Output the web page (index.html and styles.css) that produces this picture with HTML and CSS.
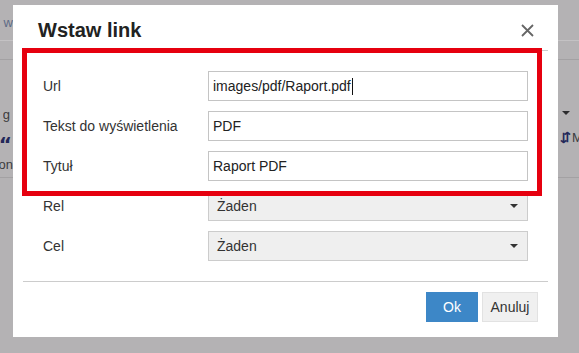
FILE: index.html
```html
<!DOCTYPE html>
<html lang="pl">
<head>
<meta charset="utf-8">
<title>Wstaw link</title>
<link rel="stylesheet" href="styles.css">
</head>
<body>
<div class="page">
  <div class="bgrow r1">
    <div class="lc"><span class="bluish">w</span></div>
    <div class="sp"></div>
    <div class="rc"></div>
  </div>
  <div class="bgrow r2">
    <div class="lc"></div>
    <div class="sp"></div>
    <div class="rc"></div>
  </div>
  <div class="bgrow r3">
    <div class="lc col">
      <span class="sub">g</span>
      <span class="sub"><span class="quote">“</span></span>
      <span class="sub">on</span>
    </div>
    <div class="sp"></div>
    <div class="rc col">
      <span class="sub"><span class="tri"></span></span>
      <span class="sub"><span class="navy">⇵</span>M</span>
      <span class="sub"></span>
    </div>
  </div>
</div>

<div class="dialog">
  <div class="dlg-head">
    <h1 class="title">Wstaw link</h1>
    <svg class="close" width="13" height="13" viewBox="0 0 13 13">
      <path d="M1 1 L12 12 M12 1 L1 12" stroke="#666" stroke-width="1.8" fill="none"/>
    </svg>
  </div>
  <div class="dlg-body">
    <div class="label">Url</div>
    <div class="field">images/pdf/Raport.pdf<span class="caret"></span></div>
    <div class="label">Tekst do wyświetlenia</div>
    <div class="field">PDF</div>
    <div class="label">Tytuł</div>
    <div class="field">Raport PDF</div>
    <div class="label">Rel</div>
    <div class="field select"><span>Żaden</span><span class="tri"></span></div>
    <div class="label">Cel</div>
    <div class="field select"><span>Żaden</span><span class="tri"></span></div>
  </div>
  <div class="dlg-foot">
    <button class="btn ok">Ok</button>
    <button class="btn cancel">Anuluj</button>
  </div>
  <div class="mark"></div>
</div>
</body>
</html>
```

FILE: styles.css
```css
html, body {
  margin: 0;
  padding: 0;
}
body {
  width: 579px;
  height: 353px;
  background: #b4b2b4;
  font-family: "Liberation Sans", Arial, sans-serif;
  overflow: hidden;
  position: relative;
}

/* background page (dimmed) */
.page {
  display: flex;
  flex-direction: column;
  color: #3c3c3e;
  font-size: 13px;
}
.bgrow {
  display: flex;
}
.r1 {
  height: 41px;
  box-sizing: border-box;
  border-bottom: 1px solid #c4c2c4;
  align-items: center;
  padding-top: 4px;
}
.r2 {
  height: 18px;
  border-bottom: 1px solid #a3a1a3;
}
.r3 {
  height: 118px;
  border-bottom: 1px solid #a3a1a3;
  padding-top: 40px;
  box-sizing: border-box;
}
.lc {
  width: 13px;
  display: flex;
  justify-content: flex-end;
  white-space: nowrap;
  box-sizing: border-box;
}
.rc {
  width: 21px;
  display: flex;
  white-space: nowrap;
  padding-left: 2px;
  box-sizing: border-box;
}
.col {
  flex-direction: column;
  align-items: flex-end;
}
.rc.col {
  align-items: flex-start;
}
.sp {
  flex: 1;
}
.sub {
  height: 25px;
  line-height: 25px;
  display: flex;
  align-items: center;
  overflow: hidden;
}
.r3 .lc .sub:first-child {
  padding-top: 2px;
  padding-right: 3px;
}
.bluish {
  color: #5d6b86;
}
.quote {
  font-family: "DejaVu Sans", sans-serif;
  font-weight: bold;
  font-size: 20px;
  color: #23285a;
  line-height: 1;
  padding-top: 9px;
  padding-right: 1px;
}
.navy {
  color: #23285a;
  font-weight: bold;
  margin-right: 1px;
}
.tri {
  display: inline-block;
  width: 0;
  height: 0;
  border-left: 4px solid transparent;
  border-right: 4px solid transparent;
  border-top: 4px solid #333;
}
.rc .tri {
  margin-left: 2px;
  border-top-color: #2c2c2e;
}

/* dialog */
.dialog {
  position: absolute;
  left: 13px;
  top: 5px;
  width: 545px;
  height: 332px;
  background: #fff;
  box-sizing: border-box;
}
.dlg-head {
  margin: 0 10px;
  height: 46px;
  padding: 6px 14px 0 15px;
  box-sizing: border-box;
  border-bottom: 1px solid #cccccc;
  display: flex;
  align-items: center;
  justify-content: space-between;
}
.title {
  margin: 0;
  font-size: 20px;
  font-weight: bold;
  color: #222;
}
.close {
  display: block;
}
.dlg-body {
  padding: 20px 30px;
  display: grid;
  grid-template-columns: 165px 320px;
  grid-auto-rows: 30px;
  row-gap: 10px;
  align-items: center;
}
.label {
  font-size: 14px;
  color: #333;
}
.field {
  height: 30px;
  box-sizing: border-box;
  border: 1px solid #c4c4c4;
  padding: 0 4px;
  display: flex;
  align-items: center;
  font-size: 14px;
  color: #222;
  background: #fff;
}
.caret {
  display: inline-block;
  width: 1px;
  height: 17px;
  background: #111;
  margin-left: 1px;
}
.select {
  background: #efefef;
  border-color: #cccccc;
  justify-content: space-between;
  padding: 0 9px 0 8px;
  color: #333;
}
.dlg-foot {
  margin: 0 10px;
  border-top: 1px solid #cccccc;
  padding: 10px 10px 0;
  display: flex;
  justify-content: flex-end;
  gap: 4px;
}
.btn {
  height: 30px;
  font-family: "Liberation Sans", Arial, sans-serif;
  font-size: 14px;
  padding: 0;
  margin: 0;
  box-sizing: border-box;
}
.ok {
  width: 52px;
  background: #3d87c7;
  color: #fff;
  border: none;
}
.cancel {
  width: 56px;
  background: #f0f0f0;
  border: 1px solid #e2e2e2;
  color: #333;
}

/* annotation overlay */
.mark {
  position: absolute;
  left: 9px;
  top: 43px;
  width: 520px;
  height: 148px;
  box-sizing: border-box;
  border: 5px solid #e6000f;
  pointer-events: none;
}
```
